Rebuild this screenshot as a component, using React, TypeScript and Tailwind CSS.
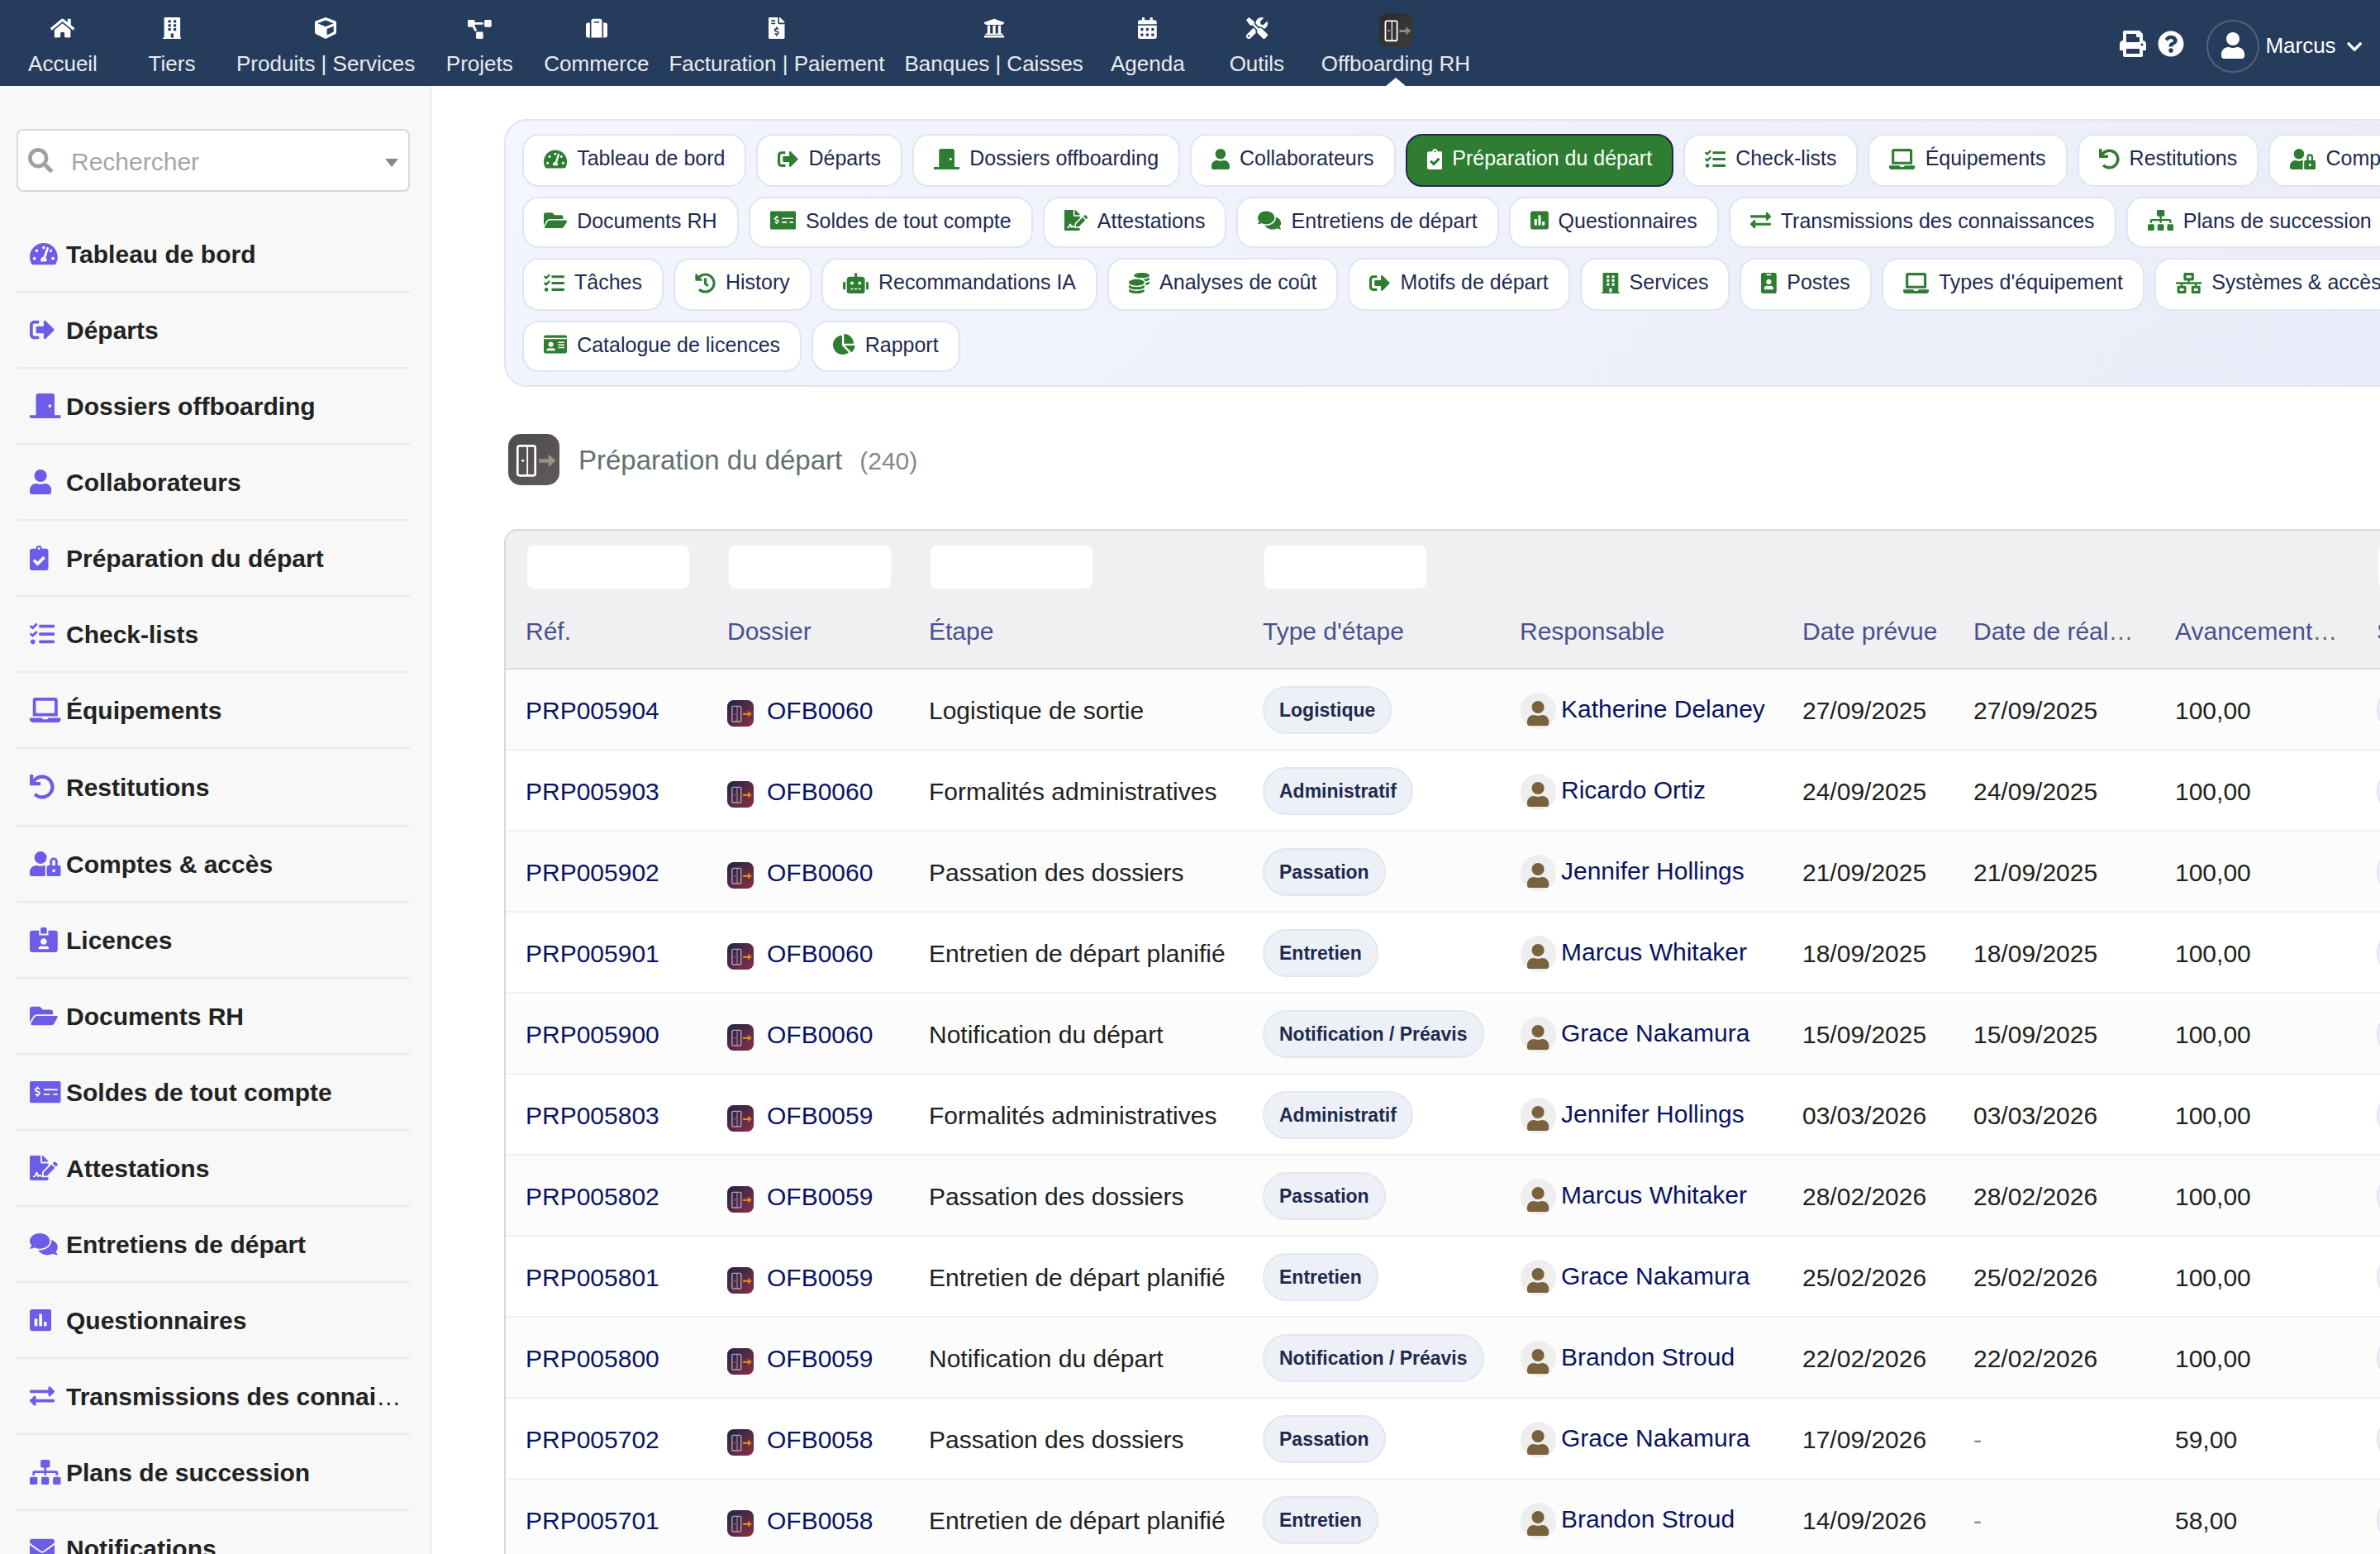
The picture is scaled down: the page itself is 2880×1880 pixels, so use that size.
import { IconContext, type IconType } from "react-icons";
import {
  FaBuilding,
  FaCalendarAlt,
  FaChartPie,
  FaChevronDown,
  FaClipboardCheck,
  FaCoins,
  FaComments,
  FaCube,
  FaDoorClosed,
  FaEnvelope,
  FaExchangeAlt,
  FaFileInvoiceDollar,
  FaFileSignature,
  FaFolderOpen,
  FaHistory,
  FaHome,
  FaIdBadge,
  FaIdCard,
  FaIdCardAlt,
  FaLaptop,
  FaMoneyCheckAlt,
  FaNetworkWired,
  FaPoll,
  FaPrint,
  FaProjectDiagram,
  FaQuestionCircle,
  FaRobot,
  FaSearch,
  FaSignOutAlt,
  FaSitemap,
  FaSuitcase,
  FaTachometerAlt,
  FaTasks,
  FaTools,
  FaUndo,
  FaUniversity,
  FaUser,
  FaUserLock,
} from "react-icons/fa";

type Item = { label: string; icon: IconType };

const topMenu: Item[] = [
  { label: "Accueil", icon: FaHome },
  { label: "Tiers", icon: FaBuilding },
  { label: "Produits | Services", icon: FaCube },
  { label: "Projets", icon: FaProjectDiagram },
  { label: "Commerce", icon: FaSuitcase },
  { label: "Facturation | Paiement", icon: FaFileInvoiceDollar },
  { label: "Banques | Caisses", icon: FaUniversity },
  { label: "Agenda", icon: FaCalendarAlt },
  { label: "Outils", icon: FaTools },
];

const sideMenu: Item[] = [
  { label: "Tableau de bord", icon: FaTachometerAlt },
  { label: "Départs", icon: FaSignOutAlt },
  { label: "Dossiers offboarding", icon: FaDoorClosed },
  { label: "Collaborateurs", icon: FaUser },
  { label: "Préparation du départ", icon: FaClipboardCheck },
  { label: "Check-lists", icon: FaTasks },
  { label: "Équipements", icon: FaLaptop },
  { label: "Restitutions", icon: FaUndo },
  { label: "Comptes & accès", icon: FaUserLock },
  { label: "Licences", icon: FaIdCardAlt },
  { label: "Documents RH", icon: FaFolderOpen },
  { label: "Soldes de tout compte", icon: FaMoneyCheckAlt },
  { label: "Attestations", icon: FaFileSignature },
  { label: "Entretiens de départ", icon: FaComments },
  { label: "Questionnaires", icon: FaPoll },
  { label: "Transmissions des connai…", icon: FaExchangeAlt },
  { label: "Plans de succession", icon: FaSitemap },
  { label: "Notifications", icon: FaEnvelope },
];

const tabRows: Item[][] = [
  [
    { label: "Tableau de bord", icon: FaTachometerAlt },
    { label: "Départs", icon: FaSignOutAlt },
    { label: "Dossiers offboarding", icon: FaDoorClosed },
    { label: "Collaborateurs", icon: FaUser },
    { label: "Préparation du départ", icon: FaClipboardCheck },
    { label: "Check-lists", icon: FaTasks },
    { label: "Équipements", icon: FaLaptop },
    { label: "Restitutions", icon: FaUndo },
    { label: "Comptes & accès", icon: FaUserLock },
  ],
  [
    { label: "Documents RH", icon: FaFolderOpen },
    { label: "Soldes de tout compte", icon: FaMoneyCheckAlt },
    { label: "Attestations", icon: FaFileSignature },
    { label: "Entretiens de départ", icon: FaComments },
    { label: "Questionnaires", icon: FaPoll },
    { label: "Transmissions des connaissances", icon: FaExchangeAlt },
    { label: "Plans de succession", icon: FaSitemap },
  ],
  [
    { label: "Tâches", icon: FaTasks },
    { label: "History", icon: FaHistory },
    { label: "Recommandations IA", icon: FaRobot },
    { label: "Analyses de coût", icon: FaCoins },
    { label: "Motifs de départ", icon: FaSignOutAlt },
    { label: "Services", icon: FaBuilding },
    { label: "Postes", icon: FaIdBadge },
    { label: "Types d'équipement", icon: FaLaptop },
    { label: "Systèmes & accès", icon: FaNetworkWired },
  ],
  [
    { label: "Catalogue de licences", icon: FaIdCard },
    { label: "Rapport", icon: FaChartPie },
  ],
];

const activeTab = "Préparation du départ";

const columns = [
  { label: "Réf.", filter: true },
  { label: "Dossier", filter: true },
  { label: "Étape", filter: true },
  { label: "Type d'étape", filter: true },
  { label: "Responsable", filter: false },
  { label: "Date prévue", filter: false },
  { label: "Date de réal…", filter: false },
  { label: "Avancement…", filter: false },
  { label: "Statut", filter: true },
];

// ref, dossier, étape, type, responsable, date prévue, date de réalisation, avancement, statut
const rows = [
  ["PRP005904", "OFB0060", "Logistique de sortie", "Logistique", "Katherine Delaney", "27/09/2025", "27/09/2025", "100,00", "Terminé"],
  ["PRP005903", "OFB0060", "Formalités administratives", "Administratif", "Ricardo Ortiz", "24/09/2025", "24/09/2025", "100,00", "Terminé"],
  ["PRP005902", "OFB0060", "Passation des dossiers", "Passation", "Jennifer Hollings", "21/09/2025", "21/09/2025", "100,00", "Terminé"],
  ["PRP005901", "OFB0060", "Entretien de départ planifié", "Entretien", "Marcus Whitaker", "18/09/2025", "18/09/2025", "100,00", "Terminé"],
  ["PRP005900", "OFB0060", "Notification du départ", "Notification / Préavis", "Grace Nakamura", "15/09/2025", "15/09/2025", "100,00", "Terminé"],
  ["PRP005803", "OFB0059", "Formalités administratives", "Administratif", "Jennifer Hollings", "03/03/2026", "03/03/2026", "100,00", "Terminé"],
  ["PRP005802", "OFB0059", "Passation des dossiers", "Passation", "Marcus Whitaker", "28/02/2026", "28/02/2026", "100,00", "Terminé"],
  ["PRP005801", "OFB0059", "Entretien de départ planifié", "Entretien", "Grace Nakamura", "25/02/2026", "25/02/2026", "100,00", "Terminé"],
  ["PRP005800", "OFB0059", "Notification du départ", "Notification / Préavis", "Brandon Stroud", "22/02/2026", "22/02/2026", "100,00", "Terminé"],
  ["PRP005702", "OFB0058", "Passation des dossiers", "Passation", "Grace Nakamura", "17/09/2026", "-", "59,00", "En cours"],
  ["PRP005701", "OFB0058", "Entretien de départ planifié", "Entretien", "Brandon Stroud", "14/09/2026", "-", "58,00", "En cours"],
];

const gridCols =
  "grid grid-cols-[244px_244px_404px_311px_342px_207px_244px_244px_200px] pl-6";

// full-size attributes let each icon keep its own width for a given height
const iconConfig = { size: "100%" };

type DoorProps = {
  id: string;
  from: string;
  to: string;
  arrow: string;
  line?: string;
  className: string;
};

function DoorIcon({ id, from, to, arrow, line = "#ffffff", className }: DoorProps) {
  return (
    <svg viewBox="0 0 62 62" className={className}>
      <defs>
        <linearGradient id={id} x1="0" y1="0" x2="1" y2="1">
          <stop offset="0" stopColor={from} />
          <stop offset="1" stopColor={to} />
        </linearGradient>
      </defs>
      <rect width="62" height="62" rx="15" fill={`url(#${id})`} />
      <rect x="11.3" y="14.3" width="21.4" height="36" rx="2.5" fill="none" stroke={line} strokeWidth="2.7" />
      <path d="M23.2 15v35" stroke={line} strokeWidth="1.8" />
      <circle cx="17.7" cy="32.3" r="1.5" fill={line} />
      <path d="M37 30.3h11.7v-5.6l9 7.6-9 7.6v-5.2H37z" fill={arrow} />
    </svg>
  );
}

function TopBar() {
  return (
    <header className="flex h-[104px] shrink-0 bg-[#263c5c] pl-2.5 text-[26px] text-white">
      {topMenu.map(({ label, icon: Icon }) => (
        <a key={label} className="flex min-w-[132px] flex-col items-center px-3 pt-[21px]">
          <Icon
            className={Icon === FaProjectDiagram ? "mt-[3px] h-[23px] w-auto" : "h-[26px] w-auto"}
          />
          <span className="mt-[15px] leading-[30px] whitespace-nowrap text-white/90">{label}</span>
        </a>
      ))}
      <a className="relative flex flex-col items-center px-3 pt-4">
        <DoorIcon id="door-top" from="#2a2a2a" to="#3d3d3d" arrow="#8a8a8a" className="ml-px size-[41px]" />
        <span className="mt-[5px] leading-[30px] whitespace-nowrap text-white/90">Offboarding RH</span>
        <svg viewBox="0 0 24 10" className="absolute bottom-0 ml-px h-2.5 w-6">
          <path d="M12 0l12 10H0z" fill="#fff" />
        </svg>
      </a>
      <div className="ml-auto flex items-center pr-[22px] pb-[1px]">
        <FaPrint className="mt-[7px] mb-1 h-8 w-auto" />
        <FaQuestionCircle className="mt-[7px] mb-1 ml-3.5 h-8 w-auto" />
        <span className="mt-[9px] ml-[27px] flex size-16 items-center justify-center rounded-full border-2 border-white/20">
          <FaUser className="mb-0.5 h-8 w-auto" />
        </span>
        <span className="mt-[7px] ml-[7px]">Marcus</span>
        <FaChevronDown className="mt-[9px] ml-[13px] h-[21px] w-auto" />
      </div>
    </header>
  );
}

function Sidebar() {
  return (
    <aside className="w-[522px] shrink-0 border-r-2 border-[#e9e9e9] bg-[#f8f8f8] pt-[52px] pr-6 pl-5">
      <div className="flex h-[76px] items-center rounded-lg border-2 border-[#d9d9d9] bg-white pr-3 pl-3">
        <FaSearch className="h-[30px] w-auto text-[#a0a0a0]" />
        <span className="mt-0.5 ml-[22px] text-[30px] text-[#a6a6a6]">Rechercher</span>
        <svg viewBox="0 0 16 10" className="mt-1.5 ml-auto h-2.5 w-4">
          <path d="M0 0h16L8 10z" fill="#888" />
        </svg>
      </div>
      <nav className="mt-[30px]">
        {sideMenu.map(({ label, icon: Icon }) => (
          <a
            key={label}
            className="flex h-[92px] items-center border-b-2 border-[#eaeaea] pl-4 nth-8:h-[94px]"
          >
            <span className="w-11 shrink-0">
              <Icon className="h-[30px] w-auto text-[#6c5ce7]" />
            </span>
            <span className="mt-px text-[30px] font-bold whitespace-nowrap text-[#222]">
              {label.replace("…", "")}
              {label.endsWith("…") && <span className="font-normal">…</span>}
            </span>
          </a>
        ))}
      </nav>
    </aside>
  );
}

function Tabs() {
  return (
    <div className="flex h-[324px] w-[2360px] flex-col gap-3 rounded-[28px] border-2 border-[#e1e5ef] bg-linear-135 from-[#f3f6fe] to-[#eaedf9] px-5 pt-4">
      {tabRows.map((row, i) => (
        <div key={i} className="group flex h-16 gap-3 even:h-[62px]">
          {row.map(({ label, icon: Icon }) => {
            const active = label === activeTab;
            return (
              <a
                key={label}
                className={
                  active
                    ? "flex shrink-0 gap-3 rounded-[20px] border-2 border-[#1e2a50] bg-[#2e7d32] px-6 text-white"
                    : "flex shrink-0 gap-3 rounded-[20px] border-2 border-[#e1e5ef] bg-white px-6 text-[#1e2a50]"
                }
              >
                <Icon
                  className={
                    "h-[25px] w-auto shrink-0 mt-4 group-even:mt-3.5 " +
                    (active ? "text-white" : "text-[#2e7d32]")
                  }
                />
                <span className="text-[25px] leading-[54px] whitespace-nowrap">{label}</span>
              </a>
            );
          })}
        </div>
      ))}
    </div>
  );
}

function TableHead() {
  return (
    <div className={gridCols + " h-[168px] border-b-2 border-[#dcdcdc] bg-[#f0f0f3] pt-[18px]"}>
      {columns.map(({ label, filter }) => (
        <div key={label}>
          <div className="h-[52px]">
            {filter && <div className="ml-0.5 h-full w-[196px] rounded-lg bg-white" />}
          </div>
          <div className="mt-[30px] text-[30px] leading-[44px] whitespace-nowrap text-[#4a508f]">
            {label.replace("…", "")}
            {label.endsWith("…") && <span className="text-[#666]">…</span>}
          </div>
        </div>
      ))}
    </div>
  );
}

function Badge({ children }: { children: string }) {
  return (
    <span className="mt-0.5 flex h-[58px] items-center rounded-full border-2 border-[#e1e6f0] bg-[#edf0f6] px-[18px] pb-px text-[23px] font-bold whitespace-nowrap text-[#1e2a50]">
      {children}
    </span>
  );
}

function TableRow({ row, index }: { row: string[]; index: number }) {
  const [ref, file, step, type, owner, planned, done, progress, status] = row;

  return (
    <div
      className={
        gridCols +
        " h-[98px] items-center border-b-2 border-[#f0f0f0] text-[30px] leading-[44px] text-[#212121] odd:bg-[#fcfcfc]"
      }
    >
      <div className="pt-1 text-[#0a1464]">{ref}</div>
      <div className="flex items-center pt-1 text-[#0a1464]">
        <DoorIcon
          id={`door-${index}`}
          from="#1f2547"
          to="#8a2f45"
          arrow="#e08a1e"
          line="#a9a3b8"
          className="mt-[5px] mr-4 size-8"
        />
        {file}
      </div>
      <div className="pt-1">{step}</div>
      <div className="flex">
        <Badge>{type}</Badge>
      </div>
      <div className="flex items-center pt-1 text-[#0a1464]">
        <span className="mr-1.5 ml-px flex h-11 w-[43px] items-center justify-center rounded-full bg-[#eeeeee]">
          <FaUser className="mt-1.5 h-[30px] w-auto text-[#79633f]" />
        </span>
        <span className="pb-[5px]">{owner}</span>
      </div>
      <div className="pt-1">{planned}</div>
      <div className={done === "-" ? "pt-1 text-[#888]" : "pt-1"}>{done}</div>
      <div className="pt-1">{progress}</div>
      <div className="flex">
        <Badge>{status}</Badge>
      </div>
    </div>
  );
}

export default function App() {
  return (
    <IconContext.Provider value={iconConfig}>
      <div className="flex h-[1880px] w-[2880px] flex-col overflow-hidden bg-white font-['Liberation_Sans',Arial,sans-serif]">
        <TopBar />
        <div className="flex min-h-0 flex-1 overflow-hidden">
          <Sidebar />
          <main className="min-w-0 flex-1 overflow-hidden pt-10 pl-[88px]">
            <Tabs />
            <div className="mt-[57px] flex h-[62px] items-center">
              <DoorIcon
                id="door-title"
                from="#4b4b4e"
                to="#625a5c"
                arrow="#9a9186"
                className="ml-[5px] size-[62px]"
              />
              <h1 className="mt-0.5 ml-[23px] text-[33px] text-[#647073]">Préparation du départ</h1>
              <span className="mt-[3px] ml-[21px] text-[30px] text-[#888]">(240)</span>
            </div>
            <div className="mt-[53px] w-[2500px] overflow-hidden rounded-tl-2xl border-2 border-[#d8d8d8]">
              <TableHead />
              <div>
                {rows.map((row, i) => (
                  <TableRow key={row[0]} row={row} index={i} />
                ))}
              </div>
            </div>
          </main>
        </div>
      </div>
    </IconContext.Provider>
  );
}
